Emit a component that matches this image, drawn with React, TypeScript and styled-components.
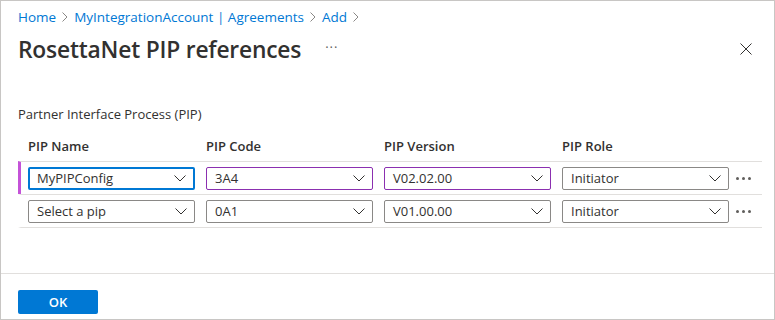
import React from "react";
import styled, { createGlobalStyle } from "styled-components";

const GlobalStyle = createGlobalStyle`
  html, body {
    margin: 0;
    padding: 0;
    background: #fff;
  }
  body {
    font-family: "Open Sans", "Noto Sans", Arial, sans-serif;
    color: #323130;
  }
`;

const Frame = styled.div`
  width: 775px;
  height: 320px;
  box-sizing: border-box;
  border: 1px solid #c8c6c4;
  display: flex;
  flex-direction: column;
  background: #fff;
`;

const Header = styled.div`
  padding: 6px 17px 0;
  display: flex;
  flex-direction: column;
`;

const Breadcrumb = styled.nav`
  display: flex;
  align-items: center;
  gap: 6px;
  height: 20px;
  font-size: 13.5px;
`;

const Crumb = styled.span`
  color: #0078d4;
`;

const Chevron = styled.span`
  display: inline-flex;
`;

const TitleRow = styled.div`
  display: flex;
  align-items: center;
  height: 40px;
  margin-top: 2px;
`;

const Title = styled.h1`
  margin: 0;
  font-size: 22.8px;
  font-weight: 600;
  letter-spacing: -0.2px;
  color: #323130;
`;

const More = styled.span`
  margin-left: 24px;
  color: #605e5c;
  font-size: 13px;
  letter-spacing: 1px;
  padding-bottom: 4px;
`;

const Close = styled.button`
  margin-left: auto;
  margin-right: 3px;
  border: none;
  background: none;
  padding: 0;
  width: 16px;
  height: 16px;
  display: flex;
  align-items: center;
  justify-content: center;
`;

const Body = styled.div`
  flex: 1;
  padding: 0 12px 0 17px;
  display: flex;
  flex-direction: column;
`;

const SectionLabel = styled.div`
  margin-top: 35px;
  font-size: 13px;
  color: #323130;
  height: 20px;
  line-height: 20px;
`;

const Table = styled.div`
  margin-top: 6px;
  display: flex;
  flex-direction: column;
`;

const HeadRow = styled.div`
  display: grid;
  grid-template-columns: repeat(4, 167px) 1fr;
  column-gap: 11px;
  padding-left: 10px;
  height: 31px;
  align-items: center;
`;

const HeadCell = styled.div`
  font-size: 13px;
  font-weight: 600;
  color: #323130;
`;

const Row = styled.div<{ $active?: boolean }>`
  display: grid;
  grid-template-columns: repeat(4, 167px) 1fr;
  column-gap: 11px;
  align-items: center;
  height: 32px;
  border-top: 1px solid #e1dfdd;
  border-left: 3px solid ${({ $active }) => ($active ? "#c452d8" : "transparent")};
  padding-left: 7px;
  &:last-child {
    border-bottom: 1px solid #e1dfdd;
  }
`;

const Select = styled.div<{ $state?: "focus" | "dirty" }>`
  height: 23px;
  box-sizing: border-box;
  display: flex;
  align-items: center;
  justify-content: space-between;
  padding: 0 7px 0 8px;
  font-size: 13px;
  color: #323130;
  border-radius: 2px;
  border: ${({ $state }) =>
    $state === "focus"
      ? "2px solid #0078d4"
      : $state === "dirty"
      ? "1px solid #8b2fb0"
      : "1px solid #8a8886"};
  padding-left: ${({ $state }) => ($state === "focus" ? "7px" : "8px")};
`;

const RowMenu = styled.div`
  display: flex;
  gap: 3px;
  margin-left: -4px;
`;

const Dot = styled.span`
  width: 3px;
  height: 3px;
  border-radius: 50%;
  background: #605e5c;
`;

const Footer = styled.div`
  border-top: 1px solid #e1dfdd;
  padding: 16px 17px 0;
  height: 46px;
  box-sizing: border-box;
`;

const OkButton = styled.button`
  width: 80px;
  height: 24px;
  border: none;
  border-radius: 2px;
  background: #0078d4;
  color: #fff;
  font-family: inherit;
  font-size: 13px;
  font-weight: 600;
  padding: 0;
`;

const ChevronDown = () => (
  <svg width="12" height="7" viewBox="0 0 12 7" fill="none">
    <path d="M0.5 0.5L6 6L11.5 0.5" stroke="#323130" strokeWidth="1" />
  </svg>
);

const CrumbChevron = () => (
  <svg width="6" height="10" viewBox="0 0 6 10" fill="none">
    <path d="M0.5 0.5L5 5L0.5 9.5" stroke="#8a8886" strokeWidth="1" />
  </svg>
);

type Cell = { value: string; state?: "focus" | "dirty" };

const rows: { active?: boolean; cells: Cell[] }[] = [
  {
    active: true,
    cells: [
      { value: "MyPIPConfig", state: "focus" },
      { value: "3A4", state: "dirty" },
      { value: "V02.02.00", state: "dirty" },
      { value: "Initiator" },
    ],
  },
  {
    cells: [
      { value: "Select a pip" },
      { value: "0A1" },
      { value: "V01.00.00" },
      { value: "Initiator" },
    ],
  },
];

export default function App() {
  return (
    <>
      <GlobalStyle />
      <Frame>
        <Header>
          <Breadcrumb>
            <Crumb>Home</Crumb>
            <Chevron>
              <CrumbChevron />
            </Chevron>
            <Crumb>MyIntegrationAccount | Agreements</Crumb>
            <Chevron>
              <CrumbChevron />
            </Chevron>
            <Crumb>Add</Crumb>
            <Chevron>
              <CrumbChevron />
            </Chevron>
          </Breadcrumb>
          <TitleRow>
            <Title>RosettaNet PIP references</Title>
            <More>···</More>
            <Close aria-label="Close">
              <svg width="12" height="12" viewBox="0 0 12 12">
                <path d="M0.5 0.5L11.5 11.5M11.5 0.5L0.5 11.5" stroke="#323130" strokeWidth="1" />
              </svg>
            </Close>
          </TitleRow>
        </Header>
        <Body>
          <SectionLabel>Partner Interface Process (PIP)</SectionLabel>
          <Table>
            <HeadRow>
              <HeadCell>PIP Name</HeadCell>
              <HeadCell>PIP Code</HeadCell>
              <HeadCell>PIP Version</HeadCell>
              <HeadCell>PIP Role</HeadCell>
            </HeadRow>
            {rows.map((row, i) => (
              <Row key={`r-${i}`} $active={row.active}>
                {row.cells.map((cell, j) => (
                  <Select key={`c-${j}`} $state={cell.state}>
                    <span>{cell.value}</span>
                    <ChevronDown />
                  </Select>
                ))}
                <RowMenu>
                  <Dot />
                  <Dot />
                  <Dot />
                </RowMenu>
              </Row>
            ))}
          </Table>
        </Body>
        <Footer>
          <OkButton>OK</OkButton>
        </Footer>
      </Frame>
    </>
  );
}
